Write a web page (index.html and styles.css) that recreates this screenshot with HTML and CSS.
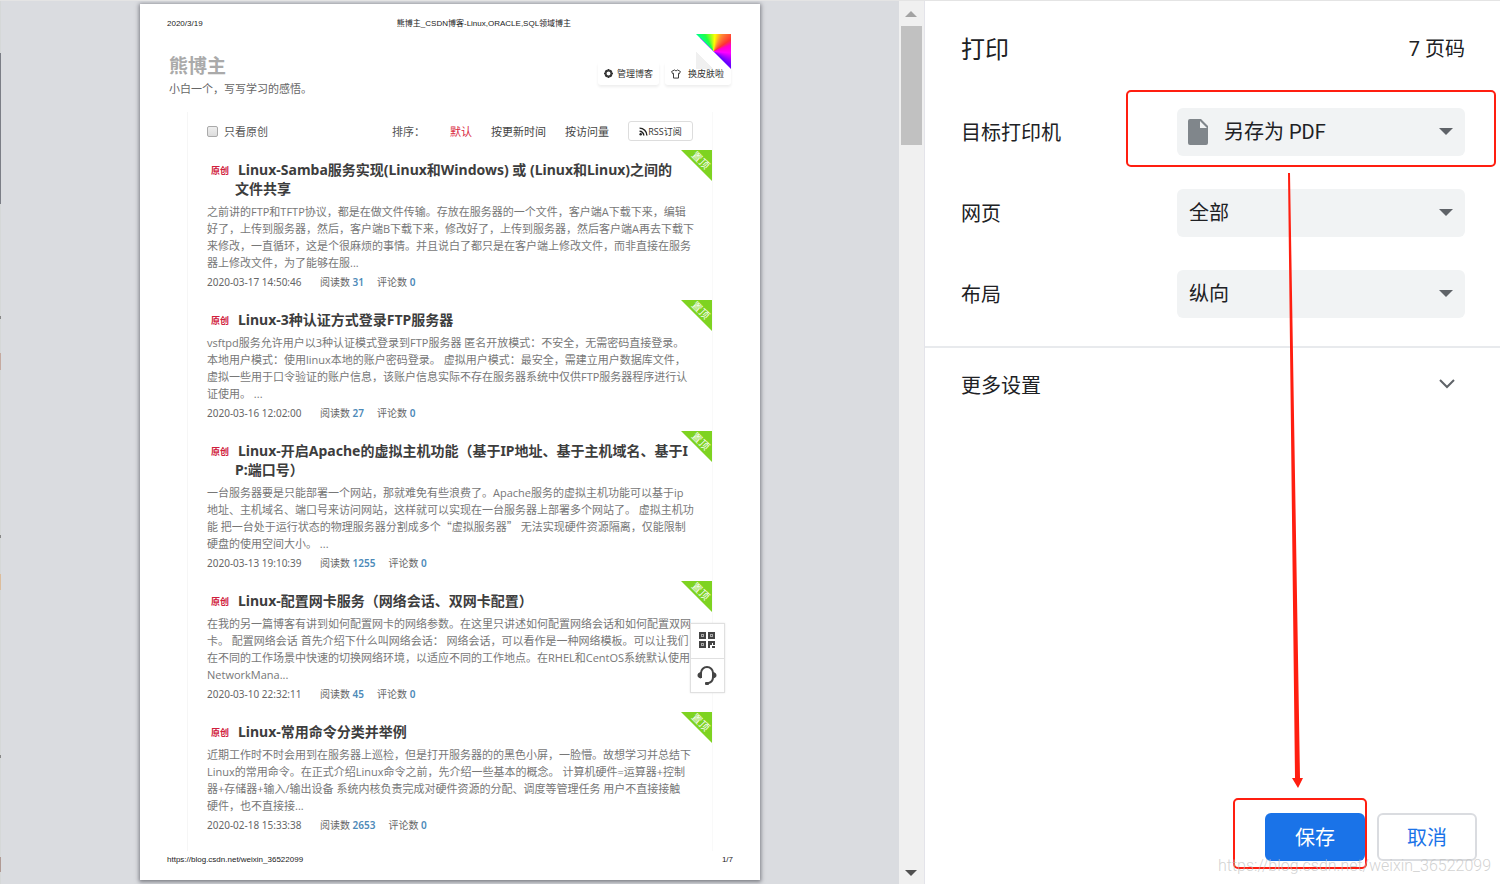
FILE: index.html
```
<!DOCTYPE html>
<html lang="zh-CN">
<head>
    <meta charset="UTF-8">
    <meta name="viewport" content="width=device-width, initial-scale=1.0">
    <title>打印</title>
    <link rel="stylesheet" href="styles.css">
</head>
<body>
    <div class="print-dialog">
        <div class="page-edge"></div>
        <main class="preview">
            <div class="paper">
                <div class="paper-header">
                    <span class="print-date">2020/3/19</span>
                    <span class="print-title">熊博主_CSDN博客-Linux,ORACLE,SQL领域博主</span>
                    <span></span>
                </div>

                <header class="blog-header">
                    <div class="blog-name">
                        <h1>熊博主</h1>
                        <p>小白一个，写写学习的感悟。</p>
                    </div>
                    <div class="skin-corner"></div>
                    <div class="blog-actions">
                        <button type="button">
                            <svg width="9" height="9" viewBox="0 0 16 16"><path fill="#333" fill-rule="evenodd" d="M6.500 0h3l.6 2.200 2-.9 2.600 2.600-1 1.900 2.300.7v3l-2.200.7.900 1.900-2.600 2.600-2-.9-.6 2.300h-3l-.6-2.300-2 .9-2.600-2.600 1-1.900L0 9.500v-3l2.300-.7-1-1.900 2.600-2.600 2 .9zM8 4.500a3.500 3.500 0 1 0 0 7 3.500 3.500 0 0 0 0-7z"/></svg>
                            管理博客
                        </button>
                        <button type="button" class="skin-btn">
                            <svg width="10" height="10" viewBox="0 0 16 16"><path fill="none" stroke="#333" stroke-width="1.500" stroke-linejoin="round" d="M5.500 1.500c1 1.600 4 1.600 5 0L15 4l-1.500 3.500-1.500-.6v7.600H4V6.900l-1.500.6L1 4z"/></svg>
                            换皮肤啦
                        </button>
                    </div>
                </header>

                <section class="article-box">
                    <div class="filter-bar">
                        <input type="checkbox" id="original">
                        <label for="original">只看原创</label>
                        <span class="sort-label">排序：</span>
                        <a href="#" class="active">默认</a>
                        <a href="#">按更新时间</a>
                        <a href="#">按访问量</a>
                        <a href="#" class="rss"><svg width="9" height="9" viewBox="0 0 16 16"><g fill="none" stroke="#222" stroke-width="2.500"><path d="M1 7.500A7.500 7.500 0 0 1 8.500 15"/><path d="M1 2a13 13 0 0 1 13 13"/></g><circle cx="3" cy="13" r="2.200" fill="#222"/></svg>RSS订阅</a>
                    </div>

                    <article>
                        <span class="top-ribbon"><b>置顶</b></span>
                        <h2><span class="tag">原创</span>Linux-Samba服务实现(Linux和Windows) 或 (Linux和Linux)之间的<br>文件共享</h2>
                        <p class="summary">之前讲的FTP和TFTP协议，都是在做文件传输。存放在服务器的一个文件，客户端A下载下来，编辑<br>好了，上传到服务器，然后，客户端B下载下来，修改好了，上传到服务器，然后客户端A再去下载下<br>来修改，一直循环，这是个很麻烦的事情。并且说白了都只是在客户端上修改文件，而非直接在服务<br>器上修改文件，为了能够在服...</p>
                        <p class="meta"><time>2020-03-17 14:50:46</time><span>阅读数 <b>31</b></span><span>评论数 <b>0</b></span></p>
                    </article>

                    <article>
                        <span class="top-ribbon"><b>置顶</b></span>
                        <h2><span class="tag">原创</span>Linux-3种认证方式登录FTP服务器</h2>
                        <p class="summary">vsftpd服务允许用户以3种认证模式登录到FTP服务器 匿名开放模式：不安全，无需密码直接登录。<br>本地用户模式：使用linux本地的账户密码登录。 虚拟用户模式：最安全，需建立用户数据库文件，<br>虚拟一些用于口令验证的账户信息，该账户信息实际不存在服务器系统中仅供FTP服务器程序进行认<br>证使用。 ...</p>
                        <p class="meta"><time>2020-03-16 12:02:00</time><span>阅读数 <b>27</b></span><span>评论数 <b>0</b></span></p>
                    </article>

                    <article>
                        <span class="top-ribbon"><b>置顶</b></span>
                        <h2><span class="tag">原创</span>Linux-开启Apache的虚拟主机功能（基于IP地址、基于主机域名、基于I<br>P:端口号）</h2>
                        <p class="summary">一台服务器要是只能部署一个网站，那就难免有些浪费了。Apache服务的虚拟主机功能可以基于ip<br>地址、主机域名、端口号来访问网站，这样就可以实现在一台服务器上部署多个网站了。 虚拟主机功<br>能 把一台处于运行状态的物理服务器分割成多个<span class="quoted">“虚拟服务器”</span> 无法实现硬件资源隔离，仅能限制<br>硬盘的使用空间大小。 ...</p>
                        <p class="meta"><time>2020-03-13 19:10:39</time><span>阅读数 <b>1255</b></span><span>评论数 <b>0</b></span></p>
                    </article>

                    <article>
                        <span class="top-ribbon"><b>置顶</b></span>
                        <h2><span class="tag">原创</span>Linux-配置网卡服务（网络会话、双网卡配置）</h2>
                        <p class="summary">在我的另一篇博客有讲到如何配置网卡的网络参数。在这里只讲述如何配置网络会话和如何配置双网<br>卡。 配置网络会话 首先介绍下什么叫网络会话： 网络会话，可以看作是一种网络模板。可以让我们<br>在不同的工作场景中快速的切换网络环境，以适应不同的工作地点。在RHEL和CentOS系统默认使用<br>NetworkMana...</p>
                        <p class="meta"><time>2020-03-10 22:32:11</time><span>阅读数 <b>45</b></span><span>评论数 <b>0</b></span></p>
                    </article>

                    <article>
                        <span class="top-ribbon"><b>置顶</b></span>
                        <h2><span class="tag">原创</span>Linux-常用命令分类并举例</h2>
                        <p class="summary">近期工作时不时会用到在服务器上巡检，但是打开服务器的的黑色小屏，一脸懵。故想学习并总结下<br>Linux的常用命令。在正式介绍Linux命令之前，先介绍一些基本的概念。 计算机硬件=运算器+控制<br>器+存储器+输入/输出设备 系统内核负责完成对硬件资源的分配、调度等管理任务 用户不直接接触<br>硬件，也不直接接...</p>
                        <p class="meta"><time>2020-02-18 15:33:38</time><span>阅读数 <b>2653</b></span><span>评论数 <b>0</b></span></p>
                    </article>
                </section>

                <div class="paper-footer">
                    <span>https://blog.csdn.net/weixin_36522099</span>
                    <span>1/7</span>
                </div>

                <div class="side-tools">
                    <button type="button" aria-label="二维码">
                        <svg width="16" height="16" viewBox="0 0 16 16"><g fill="#aaa" stroke="#444" stroke-width="2"><path d="M1 1h5v5H1zM10 1h5v5h-5zM1 10h5v5H1z"/></g><path fill="#444" d="M3 3h1v1H3zM12 3h1v1h-1zM3 12h1v1H3zM9 9h7v4h-2v-2h-1v2h-2v3H9zM13 14h3v2h-3z"/></svg>
                    </button>
                    <button type="button" aria-label="客服">
                        <svg width="20" height="20" viewBox="0 0 20 20"><path d="M4 13V8a6 6 0 0 1 12 0v4c0 3.500-2 5.500-5 6.200" fill="none" stroke="#444" stroke-width="2"/><path d="M4 7v6.500C1.500 13 .5 12 .5 10.300S1.500 7.500 4 7zM16 7v6.500c2.500-.5 3.500-1.500 3.500-3.200S18.500 7.500 16 7z" fill="#444"/><rect x="8" y="17" width="4" height="3" rx="1" fill="#444"/></svg>
                    </button>
                </div>
            </div>
        </main>

        <div class="scrollbar">
            <span class="arrow-up"></span>
            <span class="thumb"></span>
            <span class="arrow-down"></span>
        </div>

        <aside class="settings">
            <div class="settings-header">
                <h2>打印</h2>
                <span>7 页码</span>
            </div>
            <form class="settings-form">
                <div class="form-group">
                    <label for="printer">目标打印机</label>
                    <div class="select-wrap with-icon">
                        <svg class="file-icon" width="20" height="26" viewBox="0 0 20 26"><path fill="#80868b" fill-rule="evenodd" d="M2 0h11l7 7v17a2 2 0 0 1-2 2H2a2 2 0 0 1-2-2V2a2 2 0 0 1 2-2zM12 2v7h7z"/></svg>
                        <select id="printer"><option>另存为 PDF</option></select>
                        <span class="mark mark-printer"></span>
                    </div>
                </div>
                <div class="form-group">
                    <label for="pages">网页</label>
                    <div class="select-wrap">
                        <select id="pages"><option>全部</option></select>
                    </div>
                </div>
                <div class="form-group">
                    <label for="layout">布局</label>
                    <div class="select-wrap">
                        <select id="layout"><option>纵向</option></select>
                    </div>
                </div>
            </form>
            <button type="button" class="more-settings">
                更多设置
                <svg width="16" height="10" viewBox="0 0 16 10"><path d="M1 1l7 7 7-7" fill="none" stroke="#5f6368" stroke-width="2"/></svg>
            </button>
            <div class="settings-footer">
                <div class="save-wrap">
                    <button type="button" class="btn btn-save">保存</button>
                    <span class="mark mark-save"></span>
                </div>
                <button type="button" class="btn btn-cancel">取消</button>
            </div>
            <svg class="mark-arrow" width="20" height="616" viewBox="0 0 20 616"><path fill="#ff1e10" d="M3 0h2l10 605h3l-5 10-6-10h3z"/></svg>
            <span class="watermark">https://blog.csdn.net/weixin_36522099</span>
        </aside>
    </div>
</body>
</html>
```
FILE: styles.css
```
* {
    box-sizing: border-box;
}
body {
    margin: 0;
    font-family: "Open Sans", "Noto Sans CJK SC", sans-serif;
    background: #fff;
}
h1, h2, p {
    margin: 0;
}
button, select, input {
    font-family: inherit;
    margin: 0;
}
a {
    color: inherit;
    text-decoration: none;
}
.print-dialog {
    position: relative;
    display: flex;
    min-height: 100vh;
    border-top: 1px solid #e4e4e4;
    overflow: hidden;
}

/* sliver of the page behind the dialog */
.page-edge {
    position: absolute;
    left: 0;
    top: 0;
    bottom: 0;
    width: 1px;
    background: linear-gradient(#d5d8d8 52px, #7b7e86 52px, #7b7e86 203px, #d5d8d8 203px, #d5d8d8 315px, #888 315px, #888 318px, #d5d8d8 318px, #d5d8d8 352px, #c5aaa0 352px, #c5aaa0 369px, #d5d8d8 369px, #d5d8d8 534px, #888 534px, #888 537px, #d5d8d8 537px, #d5d8d8 573px, #dcbd9c 573px, #dcbd9c 589px, #d5d8d8 589px, #d5d8d8 754px, #888 754px, #888 757px, #d5d8d8 757px, #d5d8d8 856px, #b09a94 856px, #b09a94 871px, #d5d8d8 871px);
}

/* preview */
.preview {
    flex: 1;
    padding: 3px 139px 4px 140px;
    background: #dadce0;
}
.paper {
    position: relative;
    padding: 13px 27px 0;
    background: #fff;
    box-shadow: 0 1px 4px 1px rgba(60, 62, 70, 0.6);
    white-space: nowrap;
}
.paper-header, .paper-footer {
    display: flex;
    justify-content: space-between;
    height: 14px;
    font-family: "Liberation Sans", "Noto Sans CJK SC", sans-serif;
    font-size: 8px;
    line-height: 14px;
    color: #222;
}
.paper-header {
    display: grid;
    grid-template-columns: 1fr auto 1fr;
}
.print-title {
    padding-left: 68px;
}
.blog-header {
    position: relative;
    display: flex;
    justify-content: space-between;
    height: 66px;
    margin-top: 3px;
    padding-left: 2px;
}
.blog-name {
    padding-top: 18px;
}
.blog-name h1 {
    font-size: 19px;
    line-height: 28px;
    color: #aaa;
}
.blog-name p {
    font-size: 11px;
    line-height: 18px;
    color: #666;
}
.blog-actions {
    position: relative;
    display: flex;
    gap: 6px;
    padding: 28px 2px 0 0;
}
.blog-actions button {
    display: flex;
    align-items: center;
    gap: 4px;
    height: 23px;
    padding: 0 6px;
    border: none;
    border-radius: 3px;
    box-shadow: 0 2px 3px rgba(0, 0, 0, 0.07);
    background: none;
    font-size: 9px;
    color: #333;
}
.blog-actions .skin-btn {
    gap: 7px;
    padding: 0 7px 0 6px;
}
.skin-corner {
    position: absolute;
    top: 0;
    right: 2px;
    width: 35px;
    height: 35px;
    background: linear-gradient(45deg, #f0f0f0 25%, #fff 25%);
}
.skin-corner::after {
    content: "";
    display: block;
    height: 100%;
    background: conic-gradient(from 315deg, #0f8, #2f4 18deg, #ff0 50deg, #f83 72deg, #f33 100deg, #f0c 115deg, #f0f 140deg, #60f 175deg, #60f);
    clip-path: polygon(0 0, 100% 0, 100% 100%);
}
.article-box {
    margin: 12px 20px 0;
    padding: 0 0 8px 19px;
    border-left: 1px solid #f6f6f6;
    border-right: 1px solid #f9f9f9;
}
.filter-bar {
    display: flex;
    align-items: center;
    height: 38px;
    padding-right: 19px;
    font-size: 11px;
    color: #555;
}
.filter-bar input {
    appearance: none;
    width: 11px;
    height: 11px;
    border: 1px solid #aaa;
    border-radius: 2px;
    background: linear-gradient(#eee, #ddd);
}
.filter-bar label {
    margin-left: 6px;
}
.sort-label {
    margin-left: auto;
}
.filter-bar a {
    margin-left: 19px;
    color: #444;
}
.filter-bar .sort-label + a {
    margin-left: 25px;
}
.filter-bar .active {
    color: #d9273e;
}
.filter-bar .rss {
    display: flex;
    align-items: center;
    justify-content: center;
    width: 65px;
    height: 20px;
    border: 1px solid #ddd;
    border-radius: 3px;
    font-size: 9px;
    color: #333;
}
article {
    position: relative;
    padding: 10px 0;
}
article h2 {
    padding-left: 28px;
    font-family: "Noto Sans", "Noto Sans CJK SC", sans-serif;
    font-size: 14px;
    line-height: 19px;
    color: #3d3d3d;
}
.tag {
    display: inline-block;
    width: 27px;
    margin-left: -24px;
    font-size: 9px;
    line-height: 12px;
    vertical-align: 1px;
    color: #d0203c;
}
.summary {
    margin-top: 5px;
    font-size: 11px;
    line-height: 17px;
    color: #777;
}
.quoted {
    font-family: "Noto Sans CJK SC", sans-serif;
}
.meta {
    display: flex;
    gap: 13px;
    margin-top: 3px;
    font-family: "Noto Sans", "Noto Sans CJK SC", sans-serif;
    font-size: 10px;
    line-height: 16px;
    color: #666;
}
.meta time {
    min-width: 100px;
}
.meta b {
    font-weight: 600;
    color: #4d8ab8;
}
.top-ribbon {
    position: absolute;
    top: 0;
    right: 0;
    width: 31px;
    height: 31px;
    background: #7ed321;
    clip-path: polygon(0 0, 100% 0, 100% 100%);
}
.top-ribbon b {
    display: block;
    width: 40px;
    margin-top: 2px;
    font-size: 10px;
    font-weight: 400;
    line-height: 16px;
    text-align: center;
    color: #fff;
    transform: rotate(45deg);
}
.paper-footer {
    margin-top: 2px;
    height: 27px;
}
.side-tools {
    position: absolute;
    right: 35px;
    bottom: 187px;
    width: 35px;
    border: 1px solid #e0e0e0;
    background: #fff;
    box-shadow: 0 0 2px rgba(0, 0, 0, 0.1);
}
.side-tools button {
    display: flex;
    align-items: center;
    justify-content: center;
    width: 100%;
    height: 34px;
    padding: 0 1px 2px 0;
    border: none;
    background: none;
}
.side-tools button + button {
    border-top: 1px solid #e0e0e0;
}

/* scrollbar */
.scrollbar {
    display: flex;
    flex-direction: column;
    align-items: center;
    width: 26px;
    padding: 10px 1px 8px 0;
    background: #f0f0f0;
    border-right: 1px solid #e4e4ea;
}
.arrow-up, .arrow-down {
    border: 6px solid transparent;
}
.arrow-up {
    border-top: none;
    border-bottom-color: #a3a3a3;
}
.arrow-down {
    margin-top: auto;
    border-bottom: none;
    border-top-color: #505050;
}
.thumb {
    width: 21px;
    height: 119px;
    margin-top: 9px;
    background: #c1c1c1;
}

/* settings panel */
.settings {
    position: relative;
    display: flex;
    flex-direction: column;
    width: 575px;
    font-family: Roboto, "Noto Sans CJK SC", sans-serif;
    font-size: 20px;
    color: #202124;
    background: #fff;
}
.settings-header {
    display: flex;
    justify-content: space-between;
    align-items: center;
    height: 96px;
    padding: 0 35px 4px 36px;
}
.settings-header h2 {
    font-size: 24px;
    font-weight: 400;
}
.settings-form {
    display: flex;
    flex-direction: column;
    gap: 33px;
    padding: 11px 35px 28px 36px;
    border-bottom: 2px solid #e8eaed;
}
.form-group {
    display: flex;
    justify-content: space-between;
    align-items: center;
}
.form-group label {
    padding-bottom: 2px;
}
.select-wrap {
    position: relative;
    width: 288px;
}
.select-wrap select {
    display: block;
    appearance: none;
    width: 100%;
    height: 48px;
    padding: 0 40px 0 12px;
    border: none;
    border-radius: 6px;
    background: #f1f3f4;
    font-size: 20px;
    color: #202124;
}
.with-icon select {
    padding-left: 47px;
}
.select-wrap::after {
    content: "";
    position: absolute;
    right: 12px;
    top: 20px;
    border: 7px solid transparent;
    border-top-color: #5f6368;
    border-bottom: none;
}
.file-icon {
    position: absolute;
    left: 11px;
    top: 11px;
}
.more-settings {
    display: flex;
    justify-content: space-between;
    align-items: center;
    height: 74px;
    padding: 0 45px 2px 36px;
    border: none;
    background: none;
    font-size: 20px;
    color: #202124;
}
.settings-footer {
    display: flex;
    justify-content: flex-end;
    gap: 12px;
    margin-top: auto;
    padding: 0 23px 23px;
}
.save-wrap {
    position: relative;
}
.btn {
    width: 100px;
    height: 48px;
    padding-bottom: 2px;
    border: none;
    border-radius: 6px;
    font-size: 20px;
}
.btn-save {
    background: #1a73e8;
    color: #fff;
}
.btn-cancel {
    border: 2px solid #dadce0;
    background: #fff;
    color: #1a73e8;
}

/* red annotations */
.mark {
    position: absolute;
    border: 2px solid #ff1e10;
    border-radius: 5px;
    pointer-events: none;
}
.mark-printer {
    inset: -18px -31px -11px -51px;
}
.mark-save {
    inset: -15px -2px -8px -32px;
}
.mark-arrow {
    position: absolute;
    right: 195px;
    top: 172px;
}
.watermark {
    position: absolute;
    right: 9px;
    bottom: 8px;
    font-size: 16px;
    font-weight: 300;
    line-height: 20px;
    color: rgba(190, 190, 190, 0.7);
}
```
